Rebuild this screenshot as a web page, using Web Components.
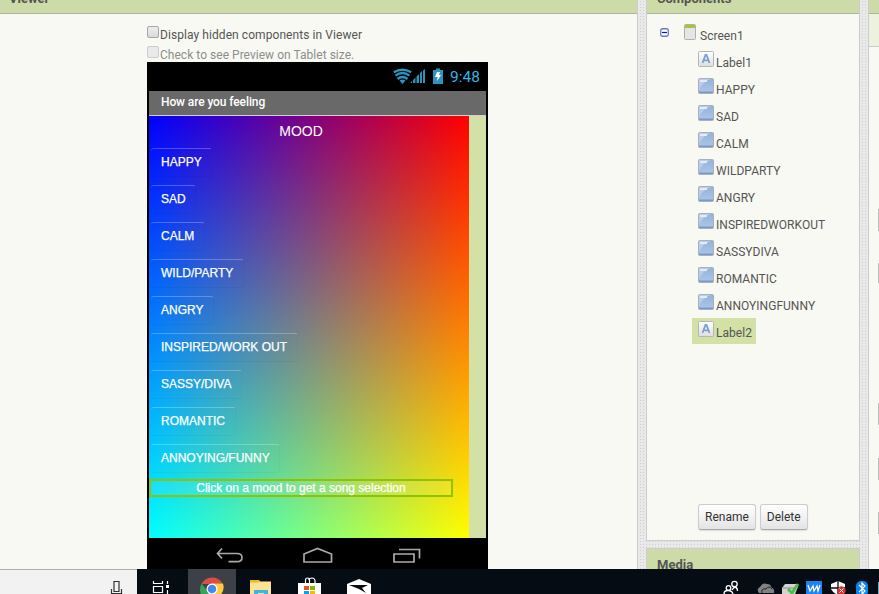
<!DOCTYPE html>
<html lang="en"><head><meta charset="utf-8"><title>App designer</title>
<style>html,body{margin:0;width:879px;height:594px;overflow:hidden}body{font-family:Roboto,"Liberation Sans",sans-serif}</style></head>
<body><designer-app></designer-app>
<script>
function define(name, html){
  const t=document.createElement('template'); t.innerHTML=html;
  customElements.define(name, class extends HTMLElement{
    constructor(){super();this.attachShadow({mode:'open'}).append(t.content.cloneNode(true));}
  });
}
define('side-panel',`<style>
:host{display:flex;flex-direction:column;box-sizing:border-box;background:#f8f9f2;overflow:hidden}
header{box-sizing:border-box;flex:none;height:var(--hh,14px);background:#ccdba8;border-bottom:1px solid #adb39f;padding-left:var(--pl,10px);font-weight:bold;font-size:13px;line-height:16px;color:#555;display:flex;align-items:flex-end}
header ::slotted(*){margin-bottom:var(--mb,6px)}
</style><header><slot name="title"></slot></header><slot></slot>`);

define('check-line',`<style>
:host{display:flex;height:20px;align-items:flex-start;font-size:12px;color:#555;line-height:14px}
i{flex:none;box-sizing:border-box;width:12px;height:12px;margin-right:1px;border:1px solid #a6a6a6;border-radius:2px;background:linear-gradient(#eee,#d9d9d9)}
span{margin-top:2px;white-space:nowrap;letter-spacing:.07px}
:host([disabled]){color:#8e8e8e}:host([disabled]) span{letter-spacing:.03px}:host([disabled]) i{border-color:#ccc;background:#eaeaea}
</style><i></i><span><slot></slot></span>`);

define('mood-button',`<style>
:host{display:block;box-sizing:border-box;width:max-content;height:29px;margin:0 0 8px 2px;padding:0 9.5px 0 10px;font:12px/27px "Liberation Sans",Arial,sans-serif;color:#fff;border-radius:3px;border-top:1px solid rgba(255,255,255,.25);border-right:1px solid rgba(0,0,0,.025);border-bottom:1px solid rgba(0,0,0,.035);-webkit-text-stroke:.25px #fff}
</style><slot></slot>`);

define('phone-preview',`<style>
:host{display:flex;flex-direction:column;box-sizing:border-box;width:341px;height:507px;background:#000;color:#fff}
.status{height:29px;flex:none;display:flex;justify-content:flex-end;align-items:center;padding-right:8px;box-sizing:border-box;color:#33b5e5;font-size:15.5px;line-height:28px}
.status svg{margin:-2px 5px 0 0}
.title{height:24px;flex:none;box-sizing:border-box;margin:0 2px;padding-left:12px;background:#696969;font-weight:500;font-size:12px;line-height:22px;letter-spacing:-.1px}
.body{display:flex;flex:none;height:423px;box-sizing:border-box;margin:0 2px;border-top:1px solid #d0d0d0;background:#d3e0a6}
.canvas{width:320px;height:422px;background:linear-gradient(90deg,#00f,#f00),linear-gradient(#000,#0f0);background-blend-mode:screen}
.mood{font:14px/17px "Liberation Sans",Arial,sans-serif;text-align:center;width:304px;height:32px;padding-top:7px;box-sizing:border-box}
.hint{box-sizing:border-box;width:304px;height:18px;margin-top:-2px;border:2px solid #8fc202;font:12px/14px "Liberation Sans",Arial,sans-serif;text-align:center;-webkit-text-stroke:.25px #fff;background:rgba(255,255,255,.08)}
.nav{flex:1;display:flex}
</style>
<div class="status"><svg width="52" height="16" viewBox="0 0 52 16" fill="#2c94bd">
<path d="M9.5 16L6.5 12.5Q9.5 10.5 12.500 12.500Z"/><g fill="none" stroke="#2c94bd" stroke-width="2.3"><path d="M4.500 11Q9.500 7 14.500 11M2.500 7.700Q9.500 2.300 16.500 7.700M.800 4.300Q9.500-.800 18.200 4.300"/></g>
<path d="M17 15h2v-2zM20 15h2.500v-5.500l-2.500 2.500zM23.500 15h2.500V6l-2.500 2.500zM27 15h2V3l-2 2zM30 15h2V1l-2 1.500z"/><path d="M40 2h3V.500h4V2h3v14H40z"/><path d="M44 4h3l-1 3h2l-4 6 .6-4H42z" fill="#fff"/></svg><span>9:48</span></div>
<div class="title">How are you feeling</div>
<div class="body"><div class="canvas"><div class="mood">MOOD</div>
<mood-button>HAPPY</mood-button><mood-button>SAD</mood-button><mood-button>CALM</mood-button><mood-button>WILD/PARTY</mood-button><mood-button>ANGRY</mood-button><mood-button>INSPIRED/WORK OUT</mood-button><mood-button>SASSY/DIVA</mood-button><mood-button>ROMANTIC</mood-button><mood-button>ANNOYING/FUNNY</mood-button>
<div class="hint">Click on a mood to get a song selection</div></div></div>
<div class="nav"><svg width="341" height="31" fill="none" stroke="#aaa" stroke-width="1.7"><path d="M75 10.500L70.500 15.500 75 20.500M71 15.500H90Q95 15.500 95 19.500 95 23.700 90 23.700H81.500"/><path d="M157 24V16L170.500 10.500 184.500 16V24Z"/><path d="M247 16h20v8h-20zM252 11.500h20.500v9"/></svg></div>`);

customElements.define('tree-item',class extends HTMLElement{
 constructor(){super();const k=this.getAttribute('kind');
 const icon=k==='label'?`<svg width="16" height="16"><defs><linearGradient id="g" x2="0" y2="1"><stop stop-color="#fff"/><stop offset="1" stop-color="#dedede"/></linearGradient></defs><rect x=".5" y=".5" width="15" height="15" rx="1" fill="url(#g)" stroke="#b5b5b5"/><path d="M4.500 12L7.500 4h1l3 8M5.700 9.300h4.600" fill="none" stroke="#7c9fd2" stroke-width="1.800"/></svg>`
 :k==='button'?`<svg width="16" height="16"><defs><linearGradient id="g" x2="0" y2="1"><stop stop-color="#94b1db"/><stop offset="1" stop-color="#aec7e8"/></linearGradient></defs><rect x=".5" y=".5" width="15" height="15" rx="1" fill="url(#g)" stroke="#aab0b8"/><path d="M1 1h12Q4 4 1 12z" fill="#b9cdea"/><path d="M2 2h7v2H2z" fill="#e2ebf7"/><path d="M1 13.500h14V15H1z" fill="#7899cd"/></svg>`
 :`<svg width="12" height="16"><rect x=".5" y=".5" width="11" height="15" rx="1" fill="#e5e5e5" stroke="#b0b0b0"/><path d="M1 1h10v3H1z" fill="#a5c53b"/></svg>`;
 this.attachShadow({mode:'open'}).innerHTML=`<style>:host{display:flex;box-sizing:border-box;height:26px;width:max-content;margin:0 0 1px 45px;padding:3px 4px 0 6px;font-size:12px;line-height:14px;color:#555}
 :host([kind=screen]){margin-left:17px;padding-left:21px}:host([selected]){background:#d3e0a6}svg{flex:none}span{margin:5px 0 0 2px;white-space:nowrap;letter-spacing:.03px}:host([kind=screen]) span{margin-left:4px}
 .toggle{margin:4px 15px 0 -25px}</style>${k==='screen'?'<svg class="toggle" width="9" height="9"><rect x=".75" y=".75" width="7.500" height="7.500" rx="1.500" fill="#fff" stroke="#6b78c8" stroke-width="1.300"/><path d="M2 4.500h5" stroke="#1010b0" stroke-width="1.200"/></svg>':''}${icon}<span><slot></slot></span>`;}
});
define('push-button',`<style>:host{display:block;box-sizing:border-box;height:26px;padding:0 6px;border:1px solid #ccc;border-bottom-color:#aaa;border-radius:3px;background:linear-gradient(#fff,#e4e4e4);box-shadow:0 1px 1px #ddd;color:#333;font-size:12px;line-height:24px}</style><slot></slot>`);

define('task-bar',`<style>:host{display:flex;height:25px;background:#060c14;overflow:hidden}svg{display:block}</style>
<svg width="879" height="25"><path fill="#f2f2f2" d="M0 0h137v25H0z"/><path fill="#acb0a5" d="M0 0h137v1H0z"/><g fill="none" stroke="#333" stroke-width="1.200"><path d="M114 12.500h5v10h-5zM111.500 20v4.500h10V20"/></g>
<g fill="none" stroke="#fff" stroke-width="1.200"><path d="M153.500 12v2.500h9V12M153.500 17.500h9v6h-9zM167.500 12v3M167.500 21v4"/></g><path fill="#fff" d="M166 16h3v3h-3z"/>
<path fill="#3d4046" d="M188 0h48v25h-48z"/><path fill="#d94f43" d="M201.500 15A12 12 0 0 1 222.500 14.500L212 15z"/><path fill="#35a35b" d="M201.500 14.500Q197 25 206 30L212 24 206 20z"/><path fill="#fc4" d="M212 14.500h11Q226 25 214 30z"/><circle cx="212" cy="20" r="5.500" fill="#fff"/><circle cx="212" cy="20" r="4.300" fill="#4688f1"/>
<path fill="#ffe392" d="M250 11h9l1 1.500h11V25h-21z"/><path fill="#f0b72d" d="M250 11h9v2.500h-9z"/><path fill="#3cb4e6" d="M254 21h14v4h-14z"/><path fill="#ffe392" d="M258 24h6v1h-6z"/>
<path d="M305.500 15v-4q0-2 2-2t2 2v3M308.500 11q1-2 3.500-2t3 2.500V15" fill="none" stroke="#fff" stroke-width="1.200"/><path fill="#fff" d="M298 14h23v11h-23z"/><path fill="#f25022" d="M304 17h5v4h-5z"/><path fill="#7fba00" d="M310 17h5v4h-5z"/><path fill="#00a4ef" d="M304 22h5v3h-5z"/><path fill="#ffb900" d="M310 22h5v3h-5z"/>
<path fill="#fff" d="M347 15l12-5 12 5v10h-24z"/><path fill="#060c14" d="M349 16h19l-6 3 4 5-7-4z"/>
<g fill="none" stroke="#fff" stroke-width="1.300"><circle cx="734.500" cy="15" r="2.700"/><path d="M732 21q3-5 5-1"/><circle cx="728.500" cy="19" r="2.300"/><path d="M724 25q0-3.500 4-3.500t5 3.500M734.500 18q3 .5 3 4"/></g>
<path fill="#828282" d="M759 24q-3-4 1-6 3-5 7-3 4 0 4 3 4 2 3 6z"/><path d="M762 24q-1-5 4-4 3-4 6 0" fill="none" stroke="#242424"/>
<path fill="#d3d3d3" d="M785 15h13v3l-3 7h-13v-6z"/><path d="M783 19h12" stroke="#888"/><path d="M788 20l4 4 6-9" fill="none" stroke="#49bf46" stroke-width="3"/>
<path fill="#1d82f3" d="M806 12h16v13h-16z"/><path d="M808 16l2 6 3-5 1 5 3-5 1 5 2-6" fill="none" stroke="#fff" stroke-width="1.300"/>
<path fill="#fff" d="M831 15l7-3 7 3v5q-2 4-7 6-5-2-7-6z"/><path d="M838 12v13M831 19h14" stroke="#060c14" stroke-width="1.300"/><circle cx="841.500" cy="21.500" r="4.200" fill="#d6322e"/><path d="M839.500 19.500l4 4m0-4l-4 4" stroke="#fff"/>
<rect x="856" y="12" width="12" height="16" rx="5" fill="#0a84f0"/><path d="M859 16l6 6-3 3V14l3 3-6 6" fill="none" stroke="#fff" stroke-width="1.200"/><path fill="#70a9bd" d="M878 13h1v12h-1z"/></svg>`);

define('designer-app',`<style>
:host{display:grid;grid-template-rows:569px 25px;width:879px;height:594px;overflow:hidden}
main{display:grid;grid-template-columns:638px 214px 11px;column-gap:8px;background-color:#e9e9e9;background-image:radial-gradient(#cfcfcf .6px,transparent .8px);background-size:3px 3px}
.viewer{border-right:1px solid #ccc;--pl:9px}
.checks{padding:12px 0 0 147px;height:48px;box-sizing:border-box;flex:none}
phone-preview{margin-left:147px;flex:none}
.mid{display:grid;grid-template-rows:541px 1fr;row-gap:7px}
.comp,.media{border:solid #ccc;border-width:0 1px 1px}
.media{border-width:1px 1px 0;--hh:28px;--mb:3px}
.tree{padding-top:7px;flex:1}
.btns{display:flex;gap:4px;padding:0 0 10px 51px}
.right{border-left:1px solid #ccc}
.sub{height:32px;background:#edf2df;border-bottom:1px solid #ccc;flex:none}
.edges{flex:1;background:linear-gradient(#bbb,#bbb) 9px 162px/1px 22px no-repeat,linear-gradient(#bbb,#bbb) 9px 216px/1px 20px no-repeat,linear-gradient(#bbb,#bbb) 9px 356px/1px 22px no-repeat,linear-gradient(#bbb,#bbb) 9px 411px/1px 22px no-repeat,linear-gradient(#bbb,#bbb) 9px 465px/1px 22px no-repeat}
</style><main>
<side-panel class="viewer"><span slot="title">Viewer</span><div class="checks"><check-line>Display hidden components in Viewer</check-line><check-line disabled>Check to see Preview on Tablet size.</check-line></div><phone-preview></phone-preview></side-panel>
<div class="mid"><side-panel class="comp"><span slot="title">Components</span><div class="tree"><tree-item kind="screen">Screen1</tree-item><tree-item kind="label">Label1</tree-item><tree-item kind="button">HAPPY</tree-item><tree-item kind="button">SAD</tree-item><tree-item kind="button">CALM</tree-item><tree-item kind="button">WILDPARTY</tree-item><tree-item kind="button">ANGRY</tree-item><tree-item kind="button">INSPIREDWORKOUT</tree-item><tree-item kind="button">SASSYDIVA</tree-item><tree-item kind="button">ROMANTIC</tree-item><tree-item kind="button">ANNOYINGFUNNY</tree-item><tree-item kind="label" selected>Label2</tree-item></div><div class="btns"><push-button>Rename</push-button><push-button>Delete</push-button></div></side-panel>
<side-panel class="media"><span slot="title">Media</span></side-panel></div>
<side-panel class="right"><div class="sub"></div><div class="edges"></div></side-panel>
</main><task-bar></task-bar>`);
</script></body></html>
